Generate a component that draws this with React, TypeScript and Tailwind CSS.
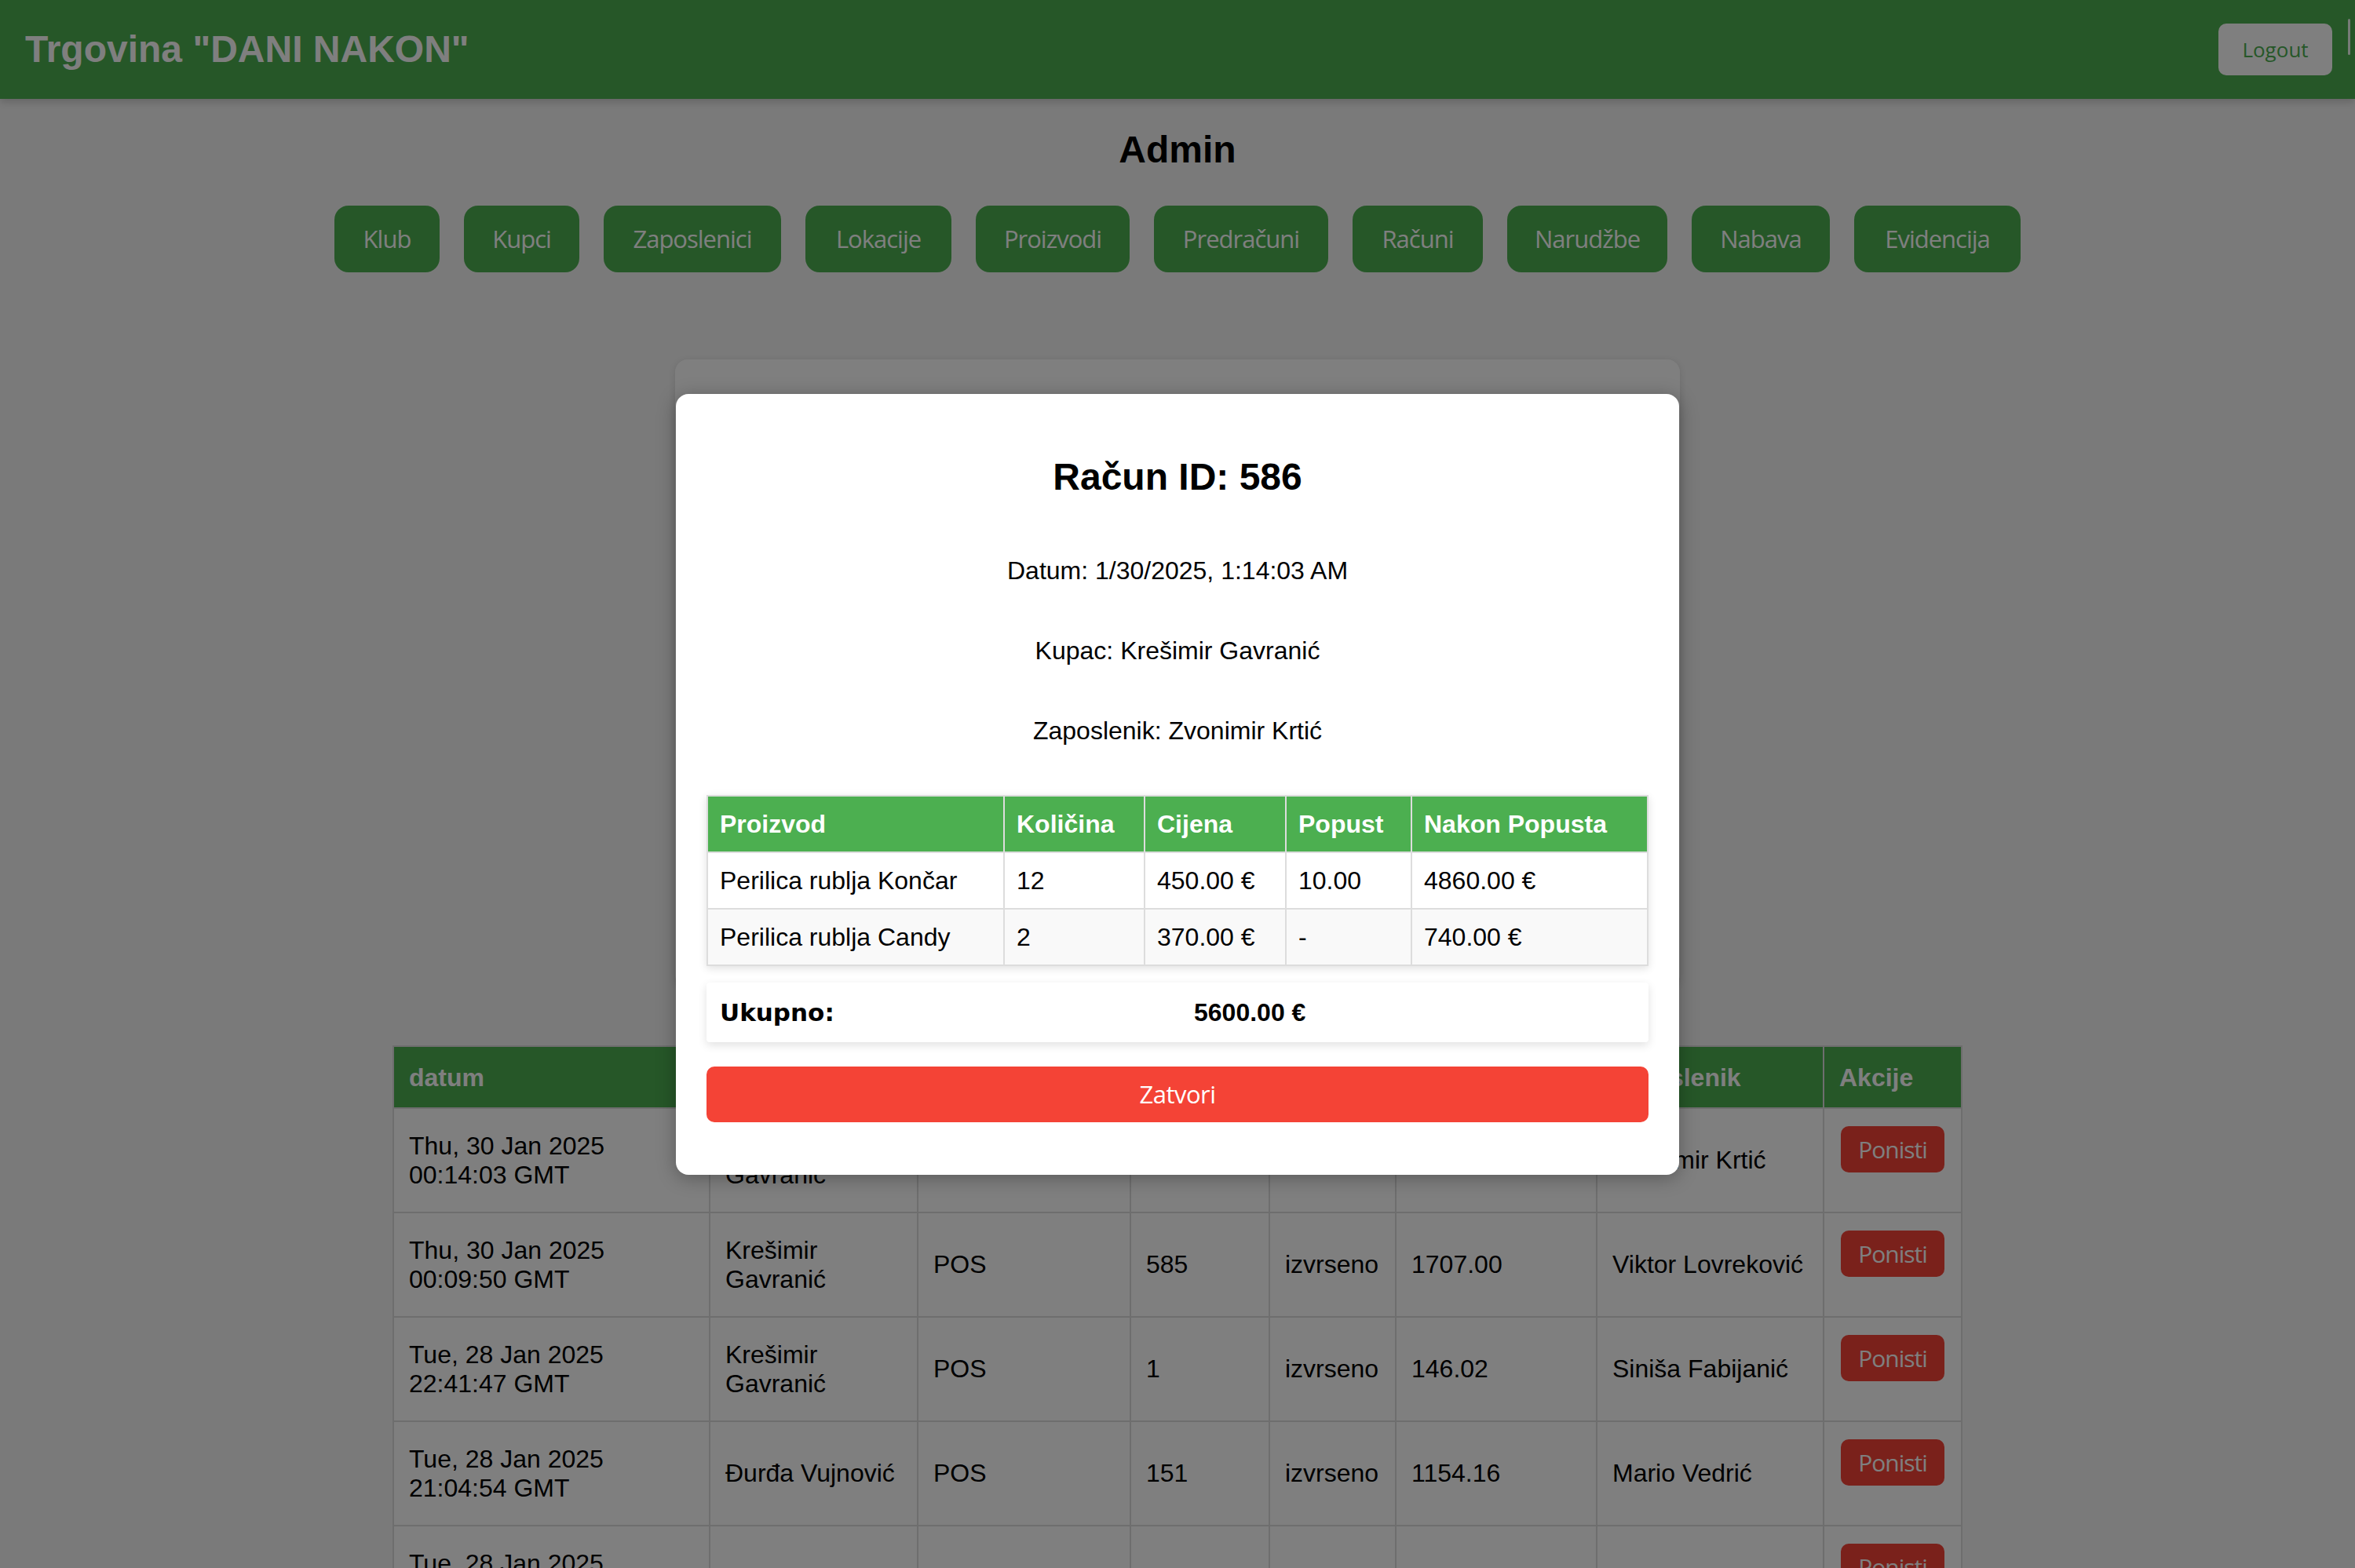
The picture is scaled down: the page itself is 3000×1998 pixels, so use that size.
const navItems = [
  { label: "Klub", w: "w-[134px]" },
  { label: "Kupci", w: "w-[147px]" },
  { label: "Zaposlenici", w: "w-[226px]" },
  { label: "Lokacije", w: "w-[186px]" },
  { label: "Proizvodi", w: "w-[196px]" },
  { label: "Predračuni", w: "w-[222px]" },
  { label: "Računi", w: "w-[166px]" },
  { label: "Narudžbe", w: "w-[204px]" },
  { label: "Nabava", w: "w-[176px]" },
  { label: "Evidencija", w: "w-[212px]" },
];

const racuni = [
  { datum: "Thu, 30 Jan 2025 00:14:03 GMT", kupac: "Krešimir Gavranić", tip: "POS", id: "586", status: "izvrseno", iznos: "5600.00", zaposlenik: "Zvonimir Krtić" },
  { datum: "Thu, 30 Jan 2025 00:09:50 GMT", kupac: "Krešimir Gavranić", tip: "POS", id: "585", status: "izvrseno", iznos: "1707.00", zaposlenik: "Viktor Lovreković" },
  { datum: "Tue, 28 Jan 2025 22:41:47 GMT", kupac: "Krešimir Gavranić", tip: "POS", id: "1", status: "izvrseno", iznos: "146.02", zaposlenik: "Siniša Fabijanić" },
  { datum: "Tue, 28 Jan 2025 21:04:54 GMT", kupac: "Đurđa Vujnović", tip: "POS", id: "151", status: "izvrseno", iznos: "1154.16", zaposlenik: "Mario Vedrić" },
  { datum: "Tue, 28 Jan 2025 20:37:12 GMT", kupac: "Ivana Horvat", tip: "POS", id: "584", status: "izvrseno", iznos: "389.90", zaposlenik: "Zvonimir Krtić" },
];

const stavke = [
  { proizvod: "Perilica rublja Končar", kolicina: "12", cijena: "450.00 €", popust: "10.00", nakon: "4860.00 €" },
  { proizvod: "Perilica rublja Candy", kolicina: "2", cijena: "370.00 €", popust: "-", nakon: "740.00 €" },
];

const th = "border-2 border-[#ddd] px-[19px] text-left text-[32px] font-bold text-white";
const td = "border-2 border-[#ddd] bg-white px-[19px] align-middle text-[32px] leading-[37px]";
const mth = "border-2 border-[#ddd] px-[15px] text-left text-[32px] font-bold text-white";
const mtd = "border-2 border-[#ddd] px-[15px] text-[32px]";

export default function App() {
  return (
    <div className="relative h-[1998px] w-[3000px] overflow-hidden bg-[#f4f4f4] font-['Liberation_Sans',Arial,sans-serif] text-black">
      <header className="flex h-[126px] items-start justify-between bg-[#4CAF50] pl-[32px] shadow-[0_3px_10px_rgba(0,0,0,0.2)]">
        <h1 className="self-center text-[48px] font-bold leading-[56px] text-white">Trgovina "DANI NAKON"</h1>
        <div className="flex items-start gap-[20px] pr-[6px]">
          <button className="mt-[30px] h-[66px] w-[145px] rounded-[10px] bg-white font-['Open_Sans',sans-serif] text-[26px] text-[#4CAF50]">
            Logout
          </button>
          <span className="mt-[24px] h-[46px] w-[3px] rounded-full bg-white/90" />
        </div>
      </header>

      <main>
        <h2 className="mt-[37px] text-center text-[48px] font-bold leading-[56px]">Admin</h2>
        <nav className="mt-[43px] flex justify-center gap-[31px]">
          {navItems.map((item) => (
            <button
              key={item.label}
              className={`${item.w} h-[85px] rounded-[18px] bg-[#4CAF50] font-['Open_Sans',sans-serif] text-[31px] tracking-[-1px] text-white`}
            >
              {item.label}
            </button>
          ))}
        </nav>

        <div className="mx-auto mt-[111px] h-[800px] w-[1280px] rounded-[16px] bg-white shadow-[0_2px_10px_rgba(0,0,0,0.12)]" />

        <table className="mx-auto mt-[74px] w-[1998px] table-fixed border-collapse">
          <colgroup>
            <col className="w-[403px]" />
            <col className="w-[265px]" />
            <col className="w-[271px]" />
            <col className="w-[177px]" />
            <col className="w-[161px]" />
            <col className="w-[256px]" />
            <col className="w-[289px]" />
            <col className="w-[176px]" />
          </colgroup>
          <thead>
            <tr className="h-[79px] bg-[#4CAF50]">
              <th className={th}>datum</th>
              <th className={th}>kupac</th>
              <th className={th}>tip</th>
              <th className={th}>broj</th>
              <th className={th}>status</th>
              <th className={th}>ukupno</th>
              <th className={th}>zaposlenik</th>
              <th className={th}>Akcije</th>
            </tr>
          </thead>
          <tbody>
            {racuni.map((r) => (
              <tr key={r.datum} className="h-[133px]">
                <td className={td}>{r.datum}</td>
                <td className={td}>{r.kupac}</td>
                <td className={td}>{r.tip}</td>
                <td className={td}>{r.id}</td>
                <td className={td}>{r.status}</td>
                <td className={td}>{r.iznos}</td>
                <td className={td}>{r.zaposlenik}</td>
                <td className="border-2 border-[#ddd] bg-white px-[21px] pt-[22px] align-top">
                  <button className="h-[59px] w-[132px] rounded-[10px] bg-[#f44336] font-['Open_Sans',sans-serif] text-[30px] tracking-[-1px] text-white">
                    Ponisti
                  </button>
                </td>
              </tr>
            ))}
          </tbody>
        </table>
      </main>

      <div className="absolute inset-0 bg-black/50" />

      <div className="absolute left-[861px] top-[502px] flex h-[995px] w-[1278px] flex-col rounded-[16px] bg-white px-[39px] pt-[78px] shadow-[0_4px_24px_rgba(0,0,0,0.3)]">
        <h2 className="text-center text-[48px] font-bold leading-[56px]">Račun ID: 586</h2>
        <p className="mt-[73px] text-center text-[32px] leading-[37px]">Datum: 1/30/2025, 1:14:03 AM</p>
        <p className="mt-[65px] text-center text-[32px] leading-[37px]">Kupac: Krešimir Gavranić</p>
        <p className="mt-[65px] text-center text-[32px] leading-[37px]">Zaposlenik: Zvonimir Krtić</p>

        <table className="mt-[63px] w-full table-fixed border-collapse shadow-[0_3px_10px_rgba(0,0,0,0.12)]">
          <colgroup>
            <col className="w-[378px]" />
            <col className="w-[179px]" />
            <col className="w-[180px]" />
            <col className="w-[160px]" />
            <col className="w-[301px]" />
          </colgroup>
          <thead>
            <tr className="h-[72px] bg-[#4CAF50]">
              <th className={mth}>Proizvod</th>
              <th className={mth}>Količina</th>
              <th className={mth}>Cijena</th>
              <th className={mth}>Popust</th>
              <th className={mth}>Nakon Popusta</th>
            </tr>
          </thead>
          <tbody>
            {stavke.map((s, idx) => (
              <tr key={s.proizvod} className={`h-[72px] ${idx % 2 === 1 ? "bg-[#f9f9f9]" : "bg-white"}`}>
                <td className={mtd}>{s.proizvod}</td>
                <td className={mtd}>{s.kolicina}</td>
                <td className={mtd}>{s.cijena}</td>
                <td className={mtd}>{s.popust}</td>
                <td className={mtd}>{s.nakon}</td>
              </tr>
            ))}
          </tbody>
        </table>

        <div className="mt-[21px] grid h-[76px] grid-cols-2 items-center rounded-[4px] bg-white shadow-[0_4px_12px_rgba(0,0,0,0.12)]">
          <span className="pl-[17px] font-['DejaVu_Sans',sans-serif] text-[31px] font-bold">Ukupno:</span>
          <span className="pl-[21px] text-[32px] font-bold">5600.00 €</span>
        </div>

        <button className="mt-[31px] h-[71px] w-full rounded-[10px] bg-[#f44336] font-['Open_Sans',sans-serif] text-[31px] tracking-[-0.5px] text-white">
          Zatvori
        </button>
      </div>
    </div>
  );
}
